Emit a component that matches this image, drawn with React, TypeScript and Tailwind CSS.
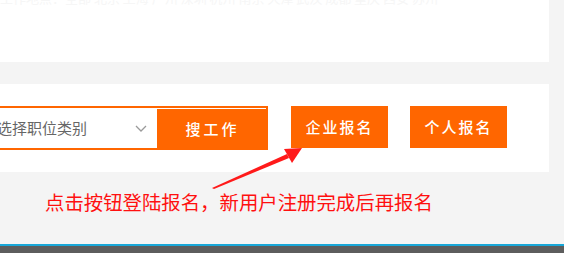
function App() {
  const cjk = { fontFamily: '"Microsoft YaHei", "Noto Sans CJK SC", sans-serif' };

  return (
    <div className="w-[564px] h-[253px] bg-[#f4f4f4] overflow-hidden flex flex-col relative" style={cjk}>
      {/* Top panel (cut off) */}
      <div className="w-[549px] h-[62px] bg-white shrink-0 overflow-hidden">
        <p className="-mt-[10px] text-[13px] leading-[16px] text-[#f6f6f6] whitespace-nowrap">
          工作地点：全部 北京 上海 广州 深圳 杭州 南京 天津 武汉 成都 重庆 西安 苏州
        </p>
      </div>

      {/* Search panel */}
      <div className="mt-[22px] w-[549px] h-[88px] bg-white shrink-0 flex items-start pt-[22px]">
        <div className="-ml-[11px] w-[279px] h-[44px] border-2 border-[#ff6600] flex">
          <div className="flex-1 flex items-center justify-between pl-[6px] pr-[10px]">
            <span className="text-[15px] text-[#666]">选择职位类别</span>
            <svg width="12" height="7" viewBox="0 0 12 7" className="mt-[1px]">
              <polyline points="1,1 6,6 11,1" fill="none" stroke="#9a9a9a" strokeWidth="1.3" />
            </svg>
          </div>
          <button className="w-[111px] mt-[1px] -mr-[2px] -mb-[2px] bg-[#ff6600] text-white text-[15px] tracking-[3px] font-medium">
            搜工作
          </button>
        </div>
        <button className="ml-[23px] w-[97px] h-[42px] bg-[#ff6600] text-white text-[15px] tracking-[2px] font-medium">
          企业报名
        </button>
        <button className="ml-[22px] w-[97px] h-[42px] bg-[#ff6600] text-white text-[15px] tracking-[2px] font-medium">
          个人报名
        </button>
      </div>

      {/* Hint text */}
      <div className="flex-1 pl-[45px] pt-[17px]">
        <p className="text-[19.4px] leading-[26px] text-[#ff1010] whitespace-nowrap">
          点击按钮登陆报名，新用户注册完成后再报名
        </p>
      </div>

      {/* Footer */}
      <div className="h-[2px] bg-[#18a7d8] shrink-0" />
      <div className="h-[7px] bg-[#5d5d5d] shrink-0" />

      {/* Arrow annotation */}
      <svg className="absolute left-0 top-0 pointer-events-none" width="564" height="253" viewBox="0 0 564 253">
        <polygon points="212,188 287,154 289,158 214,189" fill="#ff1a1a" />
        <polygon points="302,148 284,149 292,163" fill="#ff1a1a" />
      </svg>
    </div>
  );
}

export default App;
